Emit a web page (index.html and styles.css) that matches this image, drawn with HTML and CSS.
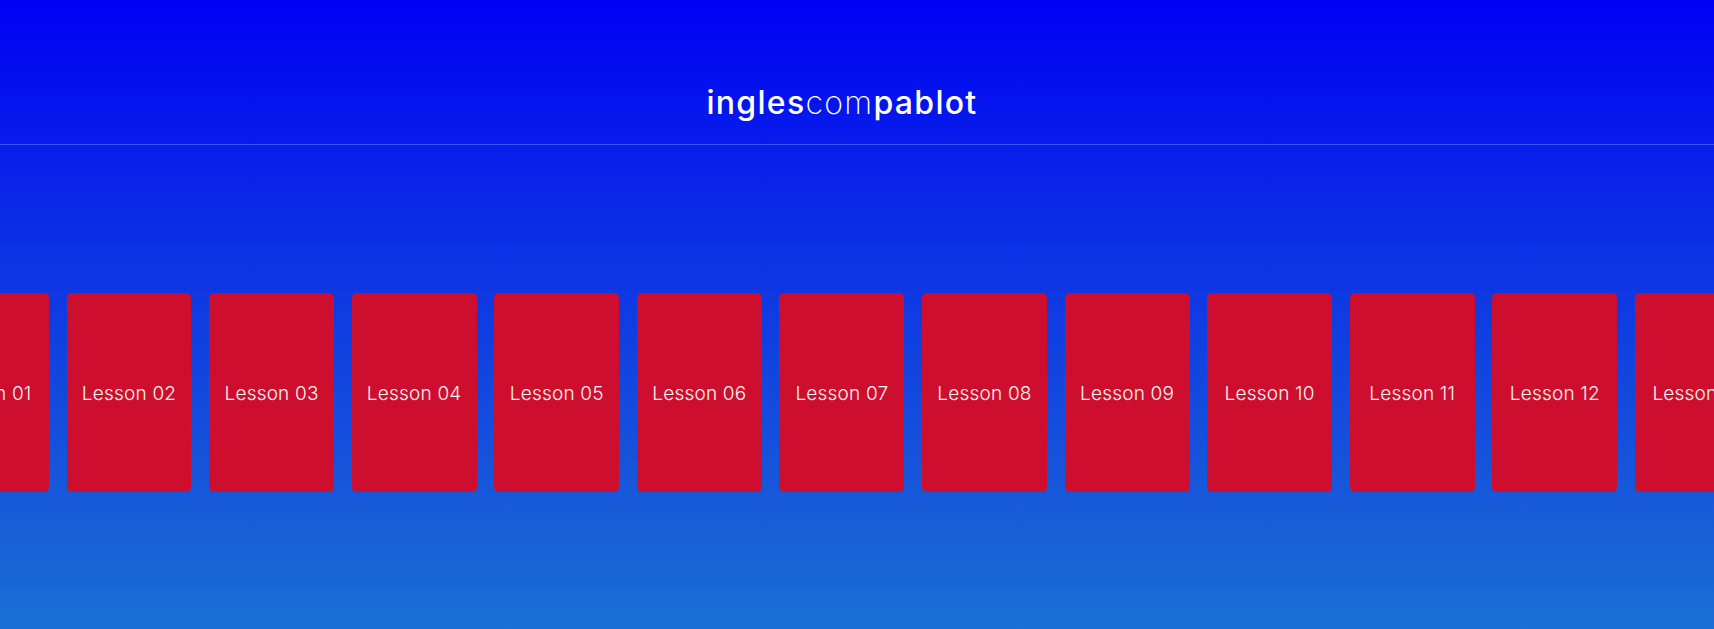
FILE: index.html
```html
<!DOCTYPE html>
<html lang="pt">
<head>
<meta charset="utf-8">
<title>inglescompablot</title>
<link rel="stylesheet" href="styles.css">
</head>
<body>
<div class="page">
  <header class="header">
    <h1 class="logo"><span class="bold">ingles</span><span class="light">com</span><span class="bold">pablot</span></h1>
  </header>
  <main class="main">
    <div class="track">
      <div class="card">Lesson 01</div>
      <div class="card">Lesson 02</div>
      <div class="card">Lesson 03</div>
      <div class="card">Lesson 04</div>
      <div class="card">Lesson 05</div>
      <div class="card">Lesson 06</div>
      <div class="card">Lesson 07</div>
      <div class="card">Lesson 08</div>
      <div class="card">Lesson 09</div>
      <div class="card">Lesson 10</div>
      <div class="card">Lesson 11</div>
      <div class="card">Lesson 12</div>
      <div class="card">Lesson 13</div>
      <div class="card">Lesson 14</div>
    </div>
  </main>
</div>
</body>
</html>
```

FILE: styles.css
```css
* { box-sizing: border-box; }
html, body { margin: 0; padding: 0; }
body {
  font-family: "Inter", "Open Sans", sans-serif;
  overflow: hidden;
}
.page {
  width: 100%;
  height: 629px;
  background: linear-gradient(180deg, #0000f5 0%, #0b2ce6 35%, #1550dc 70%, #1b6fd5 100%);
  display: flex;
  flex-direction: column;
}
.header {
  height: 145px;
  border-bottom: 1px solid rgba(120, 140, 255, 0.5);
  display: flex;
  justify-content: center;
  align-items: flex-start;
  padding-top: 84px;
  padding-right: 30px;
}
.logo {
  margin: 0;
  font-size: 32px;
  line-height: 38px;
  color: #ffffff;
  font-weight: 400;
  letter-spacing: 1.3px;
}
.logo .bold { font-weight: 450; }
.logo .light { font-weight: 200; }
.main {
  flex: 1;
  overflow: hidden;
  padding-top: 148px;
}
.track {
  display: flex;
  gap: 17.7px;
  margin-left: -76px;
}
.card {
  flex: 0 0 124.9px;
  height: 199px;
  background: #ce0e2e;
  border-radius: 5px;
  display: flex;
  align-items: center;
  justify-content: center;
  padding-top: 1px;
  color: #fff4f0;
  font-size: 19px;
  font-weight: 300;
  letter-spacing: 0.2px;
  white-space: nowrap;
}
```
